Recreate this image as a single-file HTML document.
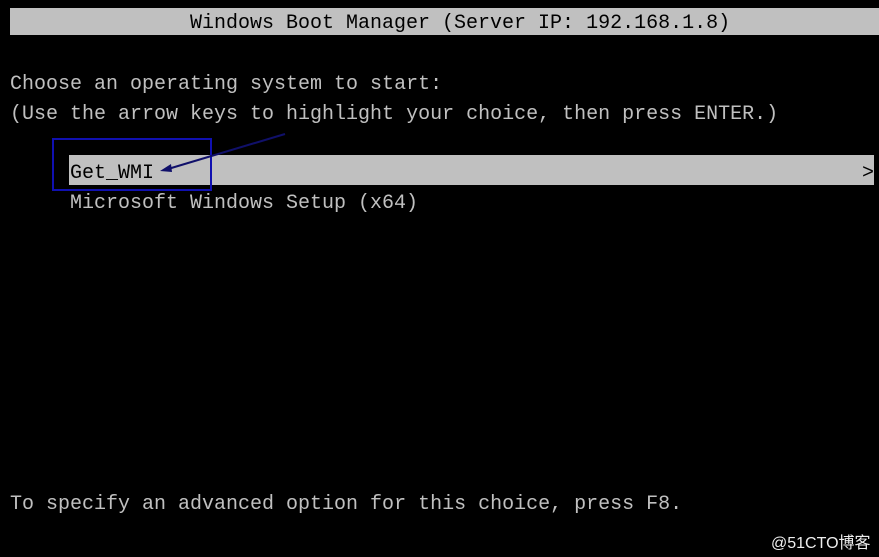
<!DOCTYPE html>
<html><head><style>
body{margin:0;width:879px;height:557px;background:#000;overflow:hidden;position:relative;font-family:"Liberation Mono",monospace;font-size:20px;color:#c0c0c0}
.t{position:absolute;white-space:pre;line-height:30px;height:30px}
</style></head><body>
<div style="position:absolute;left:10px;top:8px;width:869px;height:27px;background:#c0c0c0"></div>
<div class="t" style="left:190px;top:9px;color:#000">Windows Boot Manager (Server IP: 192.168.1.8)</div>
<div class="t" style="left:10px;top:70px">Choose an operating system to start:</div>
<div class="t" style="left:10px;top:100px">(Use the arrow keys to highlight your choice, then press ENTER.)</div>
<div style="position:absolute;left:69px;top:155px;width:805px;height:30px;background:#c0c0c0"></div>
<div class="t" style="left:70px;top:159px;color:#000">Get_WMI</div>
<div class="t" style="left:862px;top:159px;color:#000">&gt;</div>
<div class="t" style="left:70px;top:189px">Microsoft Windows Setup (x64)</div>
<div class="t" style="left:10px;top:490px">To specify an advanced option for this choice, press F8.</div>
<svg style="position:absolute;left:0;top:0" width="879" height="557">
<rect x="53" y="139" width="158" height="51" fill="none" stroke="#1010b0" stroke-width="2"/>
<line x1="285" y1="134" x2="168" y2="169" stroke="#10106a" stroke-width="2"/>
<polygon points="160,171 171,164 172,172" fill="#10106a"/>
</svg>
<div style="position:absolute;left:771px;top:529px;font-family:'Liberation Sans','Noto Sans CJK SC',sans-serif;font-size:16px;color:#eee">@51CTO博客</div>
</body></html>
